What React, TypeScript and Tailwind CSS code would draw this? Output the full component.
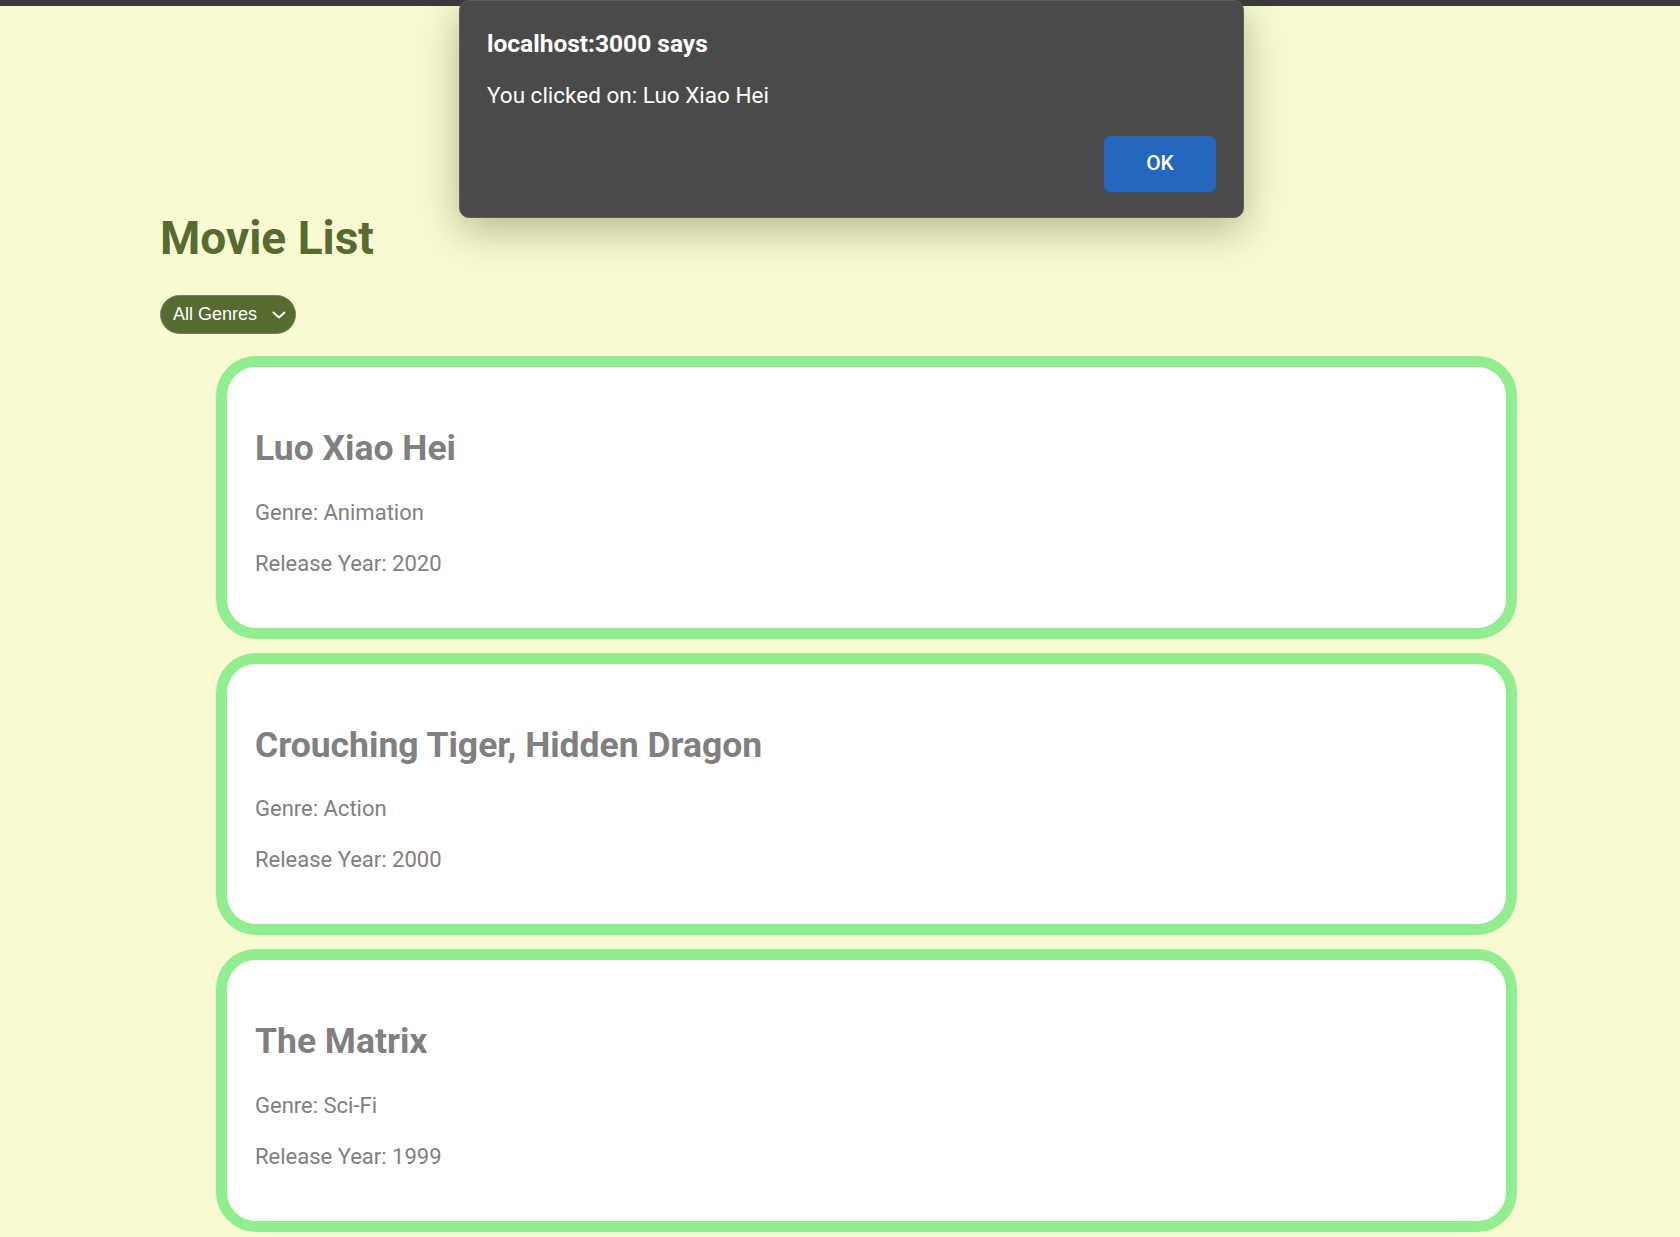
import React from "react";

const movies = [
  { title: "Luo Xiao Hei", genre: "Animation", year: 2020 },
  { title: "Crouching Tiger, Hidden Dragon", genre: "Action", year: 2000 },
  { title: "The Matrix", genre: "Sci-Fi", year: 1999 },
];

export default function App() {
  return (
    <div
      className="relative min-h-screen bg-[#fafad2] overflow-hidden"
      style={{ fontFamily: "Roboto, 'Noto Sans', sans-serif" }}
    >
      <div className="h-[6px] bg-[#3a3a3a]" />
      <div className="pl-[160px]">
        <h1 className="mt-[209px] text-[46px] leading-none font-bold text-[#556b2f]">
          Movie List
        </h1>
        <button
          className="mt-[34px] flex h-[39px] w-[136px] items-center justify-between rounded-full border border-[#7a7a6a] bg-[#556b2f] pl-[12px] pr-[9px] text-[18px] text-white"
          style={{ fontFamily: "'Liberation Sans', Arial, sans-serif" }}
        >
          <span>All Genres</span>
          <svg width="14" height="8" viewBox="0 0 14 8" fill="none">
            <path d="M1.5 1.5 L7 6.5 L12.5 1.5" stroke="white" strokeWidth="2" strokeLinecap="round" strokeLinejoin="round" />
          </svg>
        </button>
        <div className="mt-[22px] ml-[56px] flex w-[1301px] flex-col gap-[14px]">
          {movies.map((m) => (
            <div
              key={m.title}
              className="rounded-[40px] border-[11px] border-[#90ee90] bg-white pl-[28px] pt-[64px] pb-[53px] text-[#808080]"
            >
              <h2 className="text-[35.5px] leading-none font-bold">{m.title}</h2>
              <p className="mt-[35px] text-[22px] leading-none">Genre: {m.genre}</p>
              <p className="mt-[29px] text-[22px] leading-none">Release Year: {m.year}</p>
            </div>
          ))}
        </div>
      </div>

      <div className="absolute left-[459px] top-0 w-[785px] rounded-[10px] border border-[#5c5c5c] bg-[#4a4a4a] pt-[31px] px-[27px] pb-[25px] shadow-[0_12px_40px_rgba(60,60,20,0.35)]">
        <div className="text-[24.5px] leading-none font-bold text-white">localhost:3000 says</div>
        <div className="mt-[27px] text-[22.5px] leading-none text-white">You clicked on: Luo Xiao Hei</div>
        <div className="mt-[30px] flex justify-end">
          <button className="h-[56px] w-[112px] rounded-[6px] bg-[#2467bf] text-[21px] font-medium text-white">
            OK
          </button>
        </div>
      </div>
    </div>
  );
}
